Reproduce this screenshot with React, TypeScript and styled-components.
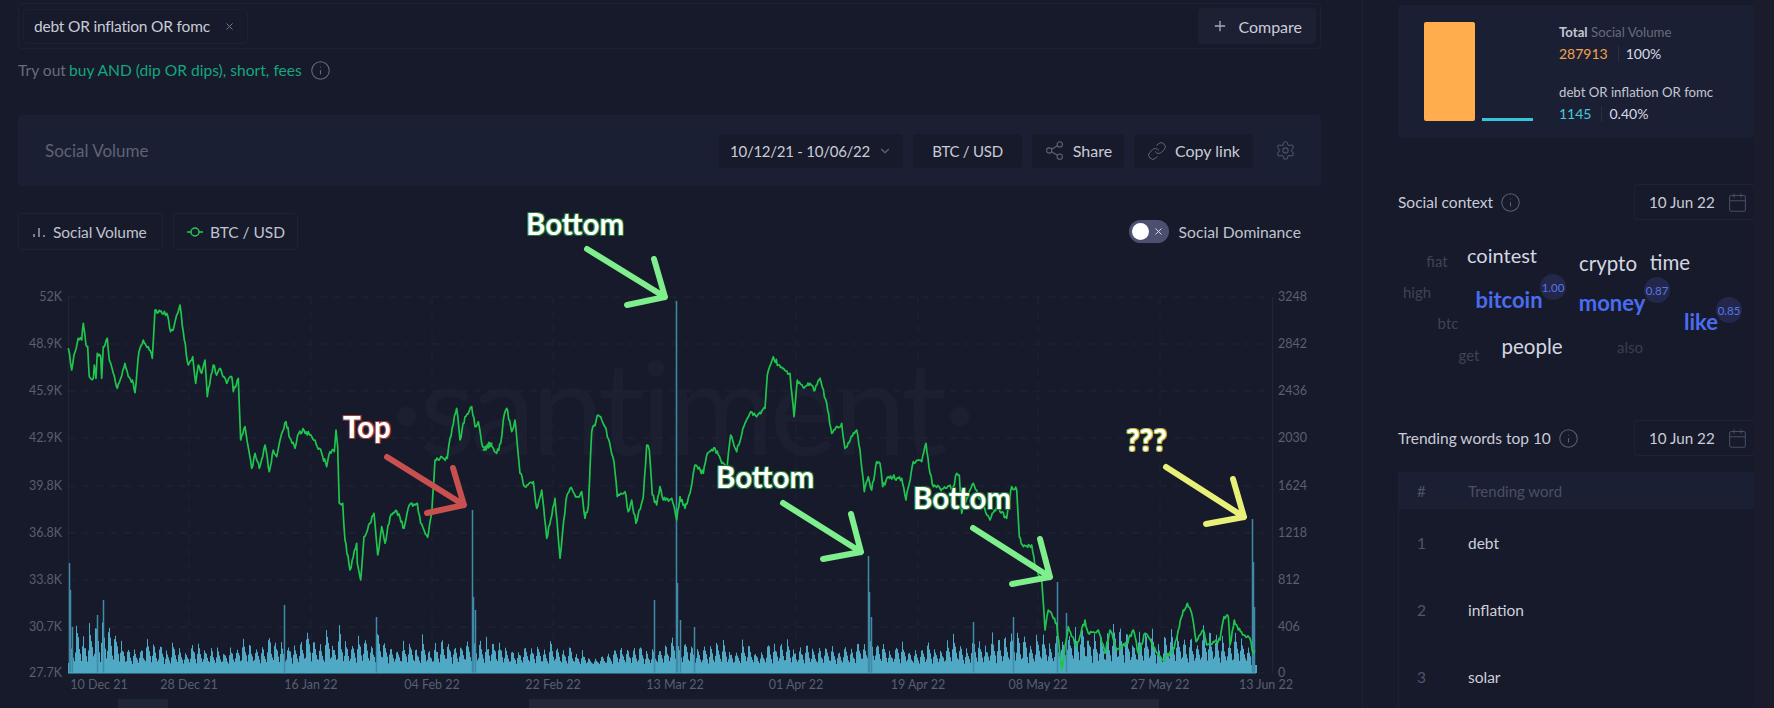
import styled, { createGlobalStyle } from 'styled-components';
import { Calendar, ChevronDown, Info, Link, Plus, Settings, Share2, X } from 'lucide-react';

const GlobalStyle = createGlobalStyle`
  html, body {
    margin: 0;
    background: #171a2a;
    overflow: hidden;
  }

  * {
    box-sizing: border-box;
  }
`;

const Page = styled.div`
  display: flex;
  width: 1774px;
  height: 708px;
  overflow: hidden;
  background: #171a2a;
  color: #d7dae4;
  font-family: 'Lato', 'Noto Sans', sans-serif;
`;

const Main = styled.main`
  width: 1362px;
  padding-top: 3px;
  flex-shrink: 0;
`;

const QueryBar = styled.div`
  display: flex;
  align-items: center;
  justify-content: space-between;
  width: 1303px;
  height: 46px;
  margin-left: 18px;
  padding: 0 4px;
  border: 1px solid #1d2133;
  border-radius: 4px;
`;

const Chip = styled.div`
  display: flex;
  align-items: center;
  gap: 14px;
  height: 35px;
  padding: 0 12px 0 10px;
  border: 1px solid #1c2032;
  border-radius: 4px;
  font-size: 15.5px;
  letter-spacing: -0.2px;
  color: #c9ccd8;

  svg {
    color: #7c8194;
  }
`;

const CompareButton = styled.div`
  display: flex;
  align-items: center;
  gap: 10px;
  height: 36px;
  padding: 0 14px;
  background: #1c2032;
  border-radius: 4px;
  font-size: 16px;
  color: #c9ccd8;

  svg {
    color: #a5a9b8;
  }
`;

const Hint = styled.div`
  display: flex;
  align-items: center;
  gap: 8px;
  height: 20px;
  margin: 11px 0 0 18px;
  font-size: 15.6px;
  color: #676c7f;

  svg {
    color: #676c7f;
  }
`;

const HintLinks = styled.span`
  margin-left: -5px;
  color: #14a67f;
`;

const ChartHeader = styled.div`
  display: flex;
  align-items: center;
  width: 1303px;
  height: 71px;
  margin: 35px 0 0 18px;
  padding: 0 25px 0 27px;
  background: #1b1f33;
  border-radius: 4px;
`;

const ChartTitle = styled.div`
  flex: 1;
  font-size: 17px;
  color: #5e6376;
`;

const HeaderActions = styled.div`
  display: flex;
  align-items: center;
  gap: 10px;
`;

const ActionButton = styled.div<{ $width: number; $compact?: boolean }>`
  display: flex;
  align-items: center;
  justify-content: center;
  gap: 8px;
  width: ${(p) => p.$width}px;
  height: 34px;
  background: #171a2a;
  border-radius: 4px;
  font-size: ${(p) => (p.$compact ? 15 : 16)}px;
  letter-spacing: ${(p) => (p.$compact ? -0.25 : 0)}px;
  color: #c9ccd8;

  svg {
    color: #5f6478;
  }
`;

const GearIcon = styled(Settings)`
  margin-left: 12px;
  color: #4d5266;
`;

const LegendRow = styled.div`
  display: flex;
  align-items: center;
  width: 1303px;
  height: 37px;
  margin: 27px 0 0 18px;
  gap: 10px;
`;

const LegendButton = styled.div<{ $width: number }>`
  display: flex;
  align-items: center;
  gap: 7px;
  width: ${(p) => p.$width}px;
  height: 37px;
  padding-left: 13px;
  border: 1px solid #1e2234;
  border-radius: 4px;
  font-size: 15.5px;
  letter-spacing: -0.05px;
  color: #c0c3d0;
`;

const DominanceToggle = styled.div`
  display: flex;
  align-items: center;
  gap: 10px;
  margin-left: auto;
  padding-right: 20px;
  font-size: 15.7px;
  color: #c0c3d0;
`;

const ToggleTrack = styled.div`
  display: flex;
  align-items: center;
  justify-content: space-between;
  width: 40px;
  height: 23px;
  padding: 0 5px 0 3px;
  background: #4c5070;
  border-radius: 12px;
  color: #e4e6ee;
`;

const ToggleKnob = styled.div`
  width: 17px;
  height: 17px;
  background: #ffffff;
  border-radius: 50%;
`;

const ChartArea = styled.div`
  position: relative;
  width: 1362px;
  height: 428px;
  margin-top: 30px;
`;

const ChartSvg = styled.svg`
  display: block;
  position: relative;
  overflow: visible;

  text {
    font-family: 'Lato', 'Noto Sans', sans-serif;
    font-size: 12.5px;
    fill: #5a5f72;
  }
`;

const Watermark = styled.div`
  position: absolute;
  left: 390px;
  top: 50px;
  font-family: 'Lato', sans-serif;
  font-weight: 400;
  font-size: 130px;
  line-height: 150px;
  letter-spacing: -4.5px;
  white-space: nowrap;
  color: #1b1f30;
`;

const Annotation = styled.div<{ $x: number; $y: number; $glow: string }>`
  position: absolute;
  left: ${(p) => p.$x}px;
  top: ${(p) => p.$y}px;
  font-size: 29.5px;
  font-weight: 700;
  line-height: 30px;
  color: #ffffff;
  white-space: nowrap;
  text-shadow:
    -1px -1px 0 ${(p) => p.$glow},
    1px -1px 0 ${(p) => p.$glow},
    -1px 1px 0 ${(p) => p.$glow},
    1px 1px 0 ${(p) => p.$glow};
`;

const FooterBand = styled.div<{ $x: number; $width: number; $color: string }>`
  position: absolute;
  left: ${(p) => p.$x}px;
  top: 419px;
  width: ${(p) => p.$width}px;
  height: 9px;
  background: ${(p) => p.$color};
`;

const Sidebar = styled.aside`
  width: 392px;
  height: 708px;
  padding: 5px 0 0 35px;
  border-left: 1px solid #1d2133;
  flex-shrink: 0;
`;

const RightGutter = styled.div`
  flex: 1;
  background: #1a1c2c;
`;

const RatioPanel = styled.div`
  display: flex;
  width: 356px;
  height: 133px;
  padding: 17px 0 0 26px;
  background: #1b1f33;
  border-radius: 4px;
`;

const RatioBars = styled.div`
  display: flex;
  align-items: flex-end;
  gap: 7px;
  height: 99px;
  margin-right: 26px;
`;

const RatioBar = styled.div<{ $height: number; $color: string }>`
  width: 51px;
  height: ${(p) => p.$height}px;
  background: ${(p) => p.$color};
  border-radius: ${(p) => (p.$height > 10 ? 2 : 0)}px;
`;

const RatioStats = styled.div`
  font-size: 13.2px;
  line-height: 20px;
`;

const StatTitle = styled.div`
  color: #c4c7d3;
`;

const StatMuted = styled.span`
  color: #666b7e;
`;

const StatStrong = styled.span`
  font-weight: 700;
`;

const StatLine = styled.div`
  display: flex;
  align-items: center;
  height: 22px;
  margin: 1px 0 17px;
  font-size: 14px;
`;

const StatValue = styled.span<{ $color: string }>`
  padding-right: 10px;
  margin-right: 7px;
  border-right: 1px solid #2a2e42;
  line-height: 16px;
  color: ${(p) => p.$color};
`;

const SectionHead = styled.div<{ $top: number }>`
  display: flex;
  align-items: center;
  gap: 7px;
  height: 36px;
  margin-top: ${(p) => p.$top}px;
  font-size: 15.5px;
  color: #c9ccd8;

  svg {
    color: #5a5f73;
  }
`;

const DateBox = styled.div`
  display: flex;
  align-items: center;
  gap: 12px;
  width: 120px;
  height: 36px;
  margin-left: auto;
  padding-left: 14px;
  border: 1px solid #1e2234;
  border-right: 0;
  border-radius: 4px 0 0 4px;
  font-size: 15.2px;
  color: #c9ccd8;

  svg {
    color: #484d63;
  }
`;

const Cloud = styled.div`
  position: relative;
  width: 356px;
  height: 182px;
`;

const CloudWord = styled.span<{ $x: number; $y: number; $size: number; $color: string; $bold?: boolean }>`
  position: absolute;
  left: ${(p) => p.$x}px;
  top: ${(p) => p.$y}px;
  transform: translate(-50%, -50%);
  font-size: ${(p) => p.$size}px;
  font-weight: ${(p) => (p.$bold ? 700 : 400)};
  color: ${(p) => p.$color};
  line-height: 1;
`;

const CloudScore = styled.span<{ $x: number; $y: number }>`
  position: absolute;
  left: ${(p) => p.$x}px;
  top: ${(p) => p.$y}px;
  display: flex;
  align-items: center;
  justify-content: center;
  width: 26px;
  height: 26px;
  transform: translate(-50%, -50%);
  background: #23284a;
  border-radius: 50%;
  font-size: 11.5px;
  color: #5675ea;
`;

const WordTable = styled.div`
  width: 356px;
  margin-top: 16px;
  border-left: 1px solid #1d2133;
`;

const TableHead = styled.div`
  display: flex;
  align-items: center;
  height: 37px;
  padding-left: 18px;
  background: #1b1f33;
  font-size: 15px;
  color: #4a4f64;
`;

const TableRow = styled.div`
  display: flex;
  align-items: center;
  height: 67px;
  padding-left: 18px;
  font-size: 15.5px;
  color: #cdd0db;
`;

const RankCell = styled.span`
  width: 51px;
  color: #50556a;
`;

type Point = [number, number];

const fromZoom = (pts: number[], ox: number): Point[] => {
  const out: Point[] = [];
  for (let i = 0; i < pts.length; i += 2) out.push([ox + pts[i] / 3, 280 + pts[i + 1] / 3]);
  return out;
};

const priceAnchors: Point[] = [
  ...fromZoom(
    [
      205, 205, 215, 270, 222, 225, 235, 175, 245, 180, 250, 130, 258, 195, 263, 200, 268, 290, 280, 295, 283, 255, 288,
      295, 292, 220, 302, 230, 305, 295, 310, 200, 322, 175, 328, 240, 340, 280, 352, 325, 362, 295, 375, 250, 385, 290,
      400, 310, 405, 338, 417, 215, 430, 180, 445, 200, 457, 235, 465, 90, 480, 95, 500, 100, 512, 155, 522, 140, 530,
      105, 540, 75, 553, 180, 565, 255, 578, 230, 587, 310, 595, 255, 605, 280, 615, 240, 622, 350, 640, 255, 650, 285,
      660, 265, 672, 290, 680, 310, 695, 290, 700, 335, 715, 295, 722, 480, 735, 440, 748, 520, 755, 565, 765, 520, 778,
      565, 795, 495, 808, 575, 820, 510, 830, 530, 838, 490, 858, 425, 870, 475, 885, 505, 893, 465, 912, 450, 935, 470,
      965, 520, 980, 560, 990, 515, 1003, 515, 1008, 450, 1013, 500, 1018, 670, 1028, 670, 1035, 780, 1050, 870, 1070,
      790, 1072, 850, 1082, 900, 1092, 770, 1110, 730, 1122, 700, 1133, 825, 1145, 740, 1155, 790, 1170, 712, 1190, 692,
      1212, 745, 1228, 675, 1252, 670, 1262, 730, 1283, 772, 1295, 700, 1305, 540, 1320, 535, 1342, 535, 1350, 475,
      1370, 385, 1380, 480, 1395, 410, 1415, 380, 1425, 440, 1435, 425, 1445, 490, 1455, 510, 1475, 490,
    ],
    0,
  ),
  ...fromZoom(
    [
      10, 510, 30, 490, 50, 520, 62, 490, 70, 420, 80, 385, 95, 455, 105, 420, 120, 580, 135, 620, 160, 605, 170, 685,
      185, 630, 200, 775, 225, 655, 240, 835, 258, 660, 270, 625, 290, 650, 305, 635, 315, 715, 325, 680, 335, 455, 355,
      405, 375, 440, 402, 545, 412, 650, 435, 635, 445, 695, 455, 660, 468, 730, 490, 650, 500, 495, 508, 510, 517, 645,
      530, 675, 540, 620, 550, 660, 575, 655, 590, 720, 600, 650, 615, 685, 630, 640, 645, 555, 670, 580, 682, 520, 705,
      505, 725, 550, 742, 555, 752, 465, 770, 515, 795, 430, 812, 395, 830, 410, 855, 385, 862, 285, 880, 230, 895, 255,
      930, 280, 942, 410, 952, 300, 975, 320, 990, 310, 1005, 330, 1020, 295, 1040, 370, 1055, 460, 1085, 430, 1095,
      505, 1130, 450, 1140, 510, 1153, 635, 1165, 590, 1175, 630, 1190, 545, 1200, 550, 1208, 620, 1225, 590, 1265, 595,
      1278, 660, 1300, 545, 1325, 545,
    ],
    480,
  ),
  ...fromZoom(
    [
      78, 490, 90, 580, 100, 620, 120, 625, 160, 620, 170, 580, 178, 585, 185, 700, 220, 610, 250, 680, 270, 720, 290,
      680, 320, 715, 335, 620, 350, 630, 358, 770, 370, 800, 395, 795, 405, 860, 425, 900, 435, 1050, 445, 990, 470,
      1030, 485, 1170, 505, 1040, 530, 1100, 555, 1020, 565, 1060, 595, 1050, 615, 1120, 630, 1050, 650, 1110, 680,
      1090, 700, 1050, 715, 1120, 735, 1060, 760, 1100, 790, 1140, 820, 1110, 835, 1050, 850, 990, 862, 970, 875, 1000,
      888, 1085, 910, 1050, 920, 1095, 960, 1080, 972, 1010, 985, 1010, 990, 1095, 1003, 1020, 1015, 1050, 1050, 1075,
      1060, 1120, 1065, 1115,
    ],
    900,
  ),
];

const seeded = (seed: number) => {
  let s = seed;
  return () => {
    s = (s * 16807) % 2147483647;
    return (s - 1) / 2147483646;
  };
};

const buildPricePath = () => {
  const rnd = seeded(4711);
  let d = '';
  priceAnchors.forEach(([x, y], i) => {
    if (i === 0) {
      d = `M${x.toFixed(1)} ${y.toFixed(1)}`;
      return;
    }
    const [px, py] = priceAnchors[i - 1];
    const steps = Math.max(1, Math.round((x - px) / 1.1));
    for (let k = 1; k <= steps; k++) {
      const t = k / steps;
      const noise = k === steps ? 0 : (rnd() - 0.5) * 5;
      d += `L${(px + (x - px) * t).toFixed(1)} ${(py + (y - py) * t + noise).toFixed(1)}`;
    }
  });
  return d;
};

const envelope: Point[] = [
  [68, 36], [112, 40], [125, 22], [230, 17], [245, 25], [330, 32], [400, 28], [440, 22], [476, 30], [500, 20],
  [570, 20], [590, 9], [640, 19], [680, 30], [700, 24], [840, 18], [870, 30], [900, 22], [1000, 28], [1060, 34],
  [1250, 30],
];

const envelopeAt = (x: number) => {
  for (let i = 1; i < envelope.length; i++) {
    const [x1, y1] = envelope[i];
    if (x <= x1) {
      const [x0, y0] = envelope[i - 1];
      return y0 + ((y1 - y0) * (x - x0)) / (x1 - x0);
    }
  }
  return 0;
};

const BASELINE = 673;

// spikes read off the reference: [x, y of the top]
const spikes: Point[] = [
  [69, 563], [70, 590], [72, 627], [97, 615], [103, 600], [284, 605], [376, 617], [472, 510], [473, 597], [475, 610],
  [654, 600], [676, 301], [677, 583], [680, 620], [694, 627], [868, 556], [869, 592], [871, 617], [973, 622],
  [1013, 617], [1057, 582], [1066, 613], [1252, 519], [1253, 562], [1254, 607],
];

const buildBars = () => {
  const rnd = seeded(91);
  const dayPeak: number[] = [];
  let d = '';
  for (let x = 68; x <= 1256; x++) {
    const pos = (x - 68) / 6.4;
    const day = Math.floor(pos);
    if (dayPeak[day] === undefined) dayPeak[day] = 0.6 + rnd() * 0.65;
    const phase = pos - day;
    const shape = phase < 0.3 ? phase / 0.3 : 1 - (phase - 0.3) / 0.7;
    const h = 8 + envelopeAt(x) * dayPeak[day] * (0.08 + 0.92 * shape) * (0.8 + rnd() * 0.35);
    d += `M${x + 0.5} ${BASELINE}V${(BASELINE - h).toFixed(1)}`;
  }
  return d;
};

const buildSpikes = () => spikes.map(([x, y]) => `M${x + 0.5} ${BASELINE}V${y}`).join('');

const pricePath = buildPricePath();
const barsPath = buildBars();
const spikesPath = buildSpikes();

const gridRows = [297, 344, 391, 438, 486, 533, 580, 627, 673];
const priceLabels = ['52K', '48.9K', '45.9K', '42.9K', '39.8K', '36.8K', '33.8K', '30.7K', '27.7K'];
const volumeLabels = ['3248', '2842', '2436', '2030', '1624', '1218', '812', '406', '0'];
const dateLabels: [number, string][] = [
  [99, '10 Dec 21'], [189, '28 Dec 21'], [311, '16 Jan 22'], [432, '04 Feb 22'], [553, '22 Feb 22'], [675, '13 Mar 22'],
  [796, '01 Apr 22'], [918, '19 Apr 22'], [1038, '08 May 22'], [1160, '27 May 22'], [1266, '13 Jun 22'],
];

const arrows: { color: string; d: string }[] = [
  { color: '#7fee8d', d: 'M587 249L665 297M654 259L665 297L627 305' },
  { color: '#c8504e', d: 'M387 457L464 505M453 468L464 505L427 513' },
  { color: '#7fee8d', d: 'M783 503L861 552M851 514L861 552L823 559' },
  { color: '#7fee8d', d: 'M973 528L1050 577M1040 539L1050 577L1012 584' },
  { color: '#e8f07a', d: 'M1166 467L1244 517M1233 479L1244 517L1206 524' },
];

const cloudWords = [
  { text: 'fiat', x: 39, y: 41, size: 15, color: '#3f4356' },
  { text: 'cointest', x: 104, y: 35, size: 20, color: '#d4d7e1' },
  { text: 'crypto', x: 210, y: 43, size: 20.5, color: '#d4d7e1' },
  { text: 'time', x: 272, y: 42, size: 20.5, color: '#d4d7e1' },
  { text: 'high', x: 19, y: 72, size: 15, color: '#3f4356' },
  { text: 'bitcoin', x: 111, y: 80, size: 22, color: '#4a6cf0', bold: true },
  { text: 'money', x: 214, y: 83, size: 22, color: '#4a6cf0', bold: true },
  { text: 'like', x: 303, y: 102, size: 22, color: '#4a6cf0', bold: true },
  { text: 'btc', x: 50, y: 103, size: 15, color: '#3f4356' },
  { text: 'get', x: 71, y: 135, size: 15, color: '#3f4356' },
  { text: 'people', x: 134, y: 126, size: 20.5, color: '#d4d7e1' },
  { text: 'also', x: 232, y: 127, size: 15, color: '#3a3e50' },
];

const cloudScores = [
  { text: '1.00', x: 155, y: 67 },
  { text: '0.87', x: 259, y: 70 },
  { text: '0.85', x: 331, y: 90 },
];

const trendingWords = ['debt', 'inflation', 'solar'];

const BarsIcon = () => (
  <svg width="14" height="14" viewBox="0 0 14 14" fill="none" stroke="#a5a9b8" strokeWidth="1.4">
    <path d="M2 12V9M7 12V3M12 12V10" />
  </svg>
);

const LineIcon = () => (
  <svg width="16" height="14" viewBox="0 0 16 14" fill="none" stroke="#26c953" strokeWidth="1.5">
    <circle cx="8" cy="7" r="4" />
    <path d="M0 7H4M12 7H16" />
  </svg>
);

const App = () => (
  <Page>
    <GlobalStyle />
    <Main>
      <QueryBar>
        <Chip>
          debt OR inflation OR fomc
          <X size={11} />
        </Chip>
        <CompareButton>
          <Plus size={16} />
          Compare
        </CompareButton>
      </QueryBar>

      <Hint>
        Try out
        <HintLinks>buy AND (dip OR dips), short, fees</HintLinks>
        <Info size={21} strokeWidth={1.2} />
      </Hint>

      <ChartHeader>
        <ChartTitle>Social Volume</ChartTitle>
        <HeaderActions>
          <ActionButton $width={184} $compact>
            10/12/21 - 10/06/22
            <ChevronDown size={14} />
          </ActionButton>
          <ActionButton $width={109} $compact>
            BTC / USD
          </ActionButton>
          <ActionButton $width={92}>
            <Share2 size={21} strokeWidth={1.2} />
            Share
          </ActionButton>
          <ActionButton $width={119}>
            <Link size={20} strokeWidth={1.2} />
            Copy link
          </ActionButton>
          <GearIcon size={21} strokeWidth={1.2} />
        </HeaderActions>
      </ChartHeader>

      <LegendRow>
        <LegendButton $width={145}>
          <BarsIcon />
          Social Volume
        </LegendButton>
        <LegendButton $width={125}>
          <LineIcon />
          BTC / USD
        </LegendButton>
        <DominanceToggle>
          <ToggleTrack>
            <ToggleKnob />
            <X size={11} />
          </ToggleTrack>
          Social Dominance
        </DominanceToggle>
      </LegendRow>

      <ChartArea>
        <Watermark>·santiment·</Watermark>
        <ChartSvg width="1362" height="428" viewBox="0 280 1362 428">
          {gridRows.map((y) => (
            <line key={y} x1="68" x2="1272" y1={y} y2={y} stroke="#212536" strokeDasharray="7 7" />
          ))}
          {dateLabels.slice(1, 10).map(([x]) => (
            <line key={x} x1={x} x2={x} y1="297" y2="673" stroke="#1f2334" strokeDasharray="7 7" />
          ))}
          <line x1="68.5" x2="68.5" y1="297" y2="673" stroke="#212536" />
          <line x1="1272.5" x2="1272.5" y1="297" y2="673" stroke="#212536" />
          <path d={barsPath} stroke="#4fa9c5" strokeWidth="1" fill="none" />
          <path d={spikesPath} stroke="#3f8aa6" strokeWidth="1.5" fill="none" />
          <line x1="68" x2="1256" y1="673" y2="673" stroke="#4fa9c5" />
          <path d={pricePath} stroke="#1fc64e" strokeWidth="1.7" fill="none" strokeLinejoin="round" />
          {priceLabels.map((label, i) => (
            <text key={label} x="62" y={gridRows[i] + 4} textAnchor="end">
              {label}
            </text>
          ))}
          {volumeLabels.map((label, i) => (
            <text key={label} x="1278" y={gridRows[i] + 4}>
              {label}
            </text>
          ))}
          {dateLabels.map(([x, label]) => (
            <text key={label} x={x} y="689" textAnchor="middle">
              {label}
            </text>
          ))}
          {arrows.map((a) => (
            <path
              key={a.d}
              d={a.d}
              stroke={a.color}
              strokeWidth="6"
              strokeLinecap="round"
              strokeLinejoin="round"
              fill="none"
            />
          ))}
        </ChartSvg>
        <Annotation $x={526} $y={-71} $glow="#1f7a35">
          Bottom
        </Annotation>
        <Annotation $x={343} $y={132} $glow="#a03c3c">
          Top
        </Annotation>
        <Annotation $x={716} $y={182} $glow="#1f7a35">
          Bottom
        </Annotation>
        <Annotation $x={913} $y={203} $glow="#1f7a35">
          Bottom
        </Annotation>
        <Annotation $x={1126} $y={145} $glow="#b5bb3c">
          ???
        </Annotation>
        <FooterBand $x={118} $width={50} $color="#1f2636" />
        <FooterBand $x={529} $width={630} $color="#24263a" />
      </ChartArea>
    </Main>

    <Sidebar>
      <RatioPanel>
        <RatioBars>
          <RatioBar $height={99} $color="#ffad4d" />
          <RatioBar $height={3} $color="#37c5da" />
        </RatioBars>
        <RatioStats>
          <StatTitle>
            <StatStrong>Total</StatStrong> <StatMuted>Social Volume</StatMuted>
          </StatTitle>
          <StatLine>
            <StatValue $color="#f2a34c">287913</StatValue>
            100%
          </StatLine>
          <StatTitle>debt OR inflation OR fomc</StatTitle>
          <StatLine>
            <StatValue $color="#4ac6dc">1145</StatValue>
            0.40%
          </StatLine>
        </RatioStats>
      </RatioPanel>

      <SectionHead $top={46}>
        Social context
        <Info size={21} strokeWidth={1.2} />
        <DateBox>
          10 Jun 22
          <Calendar size={21} strokeWidth={1.2} />
        </DateBox>
      </SectionHead>

      <Cloud>
        {cloudWords.map((w) => (
          <CloudWord key={w.text} $x={w.x} $y={w.y} $size={w.size} $color={w.color} $bold={w.bold}>
            {w.text}
          </CloudWord>
        ))}
        {cloudScores.map((s) => (
          <CloudScore key={s.text} $x={s.x} $y={s.y}>
            {s.text}
          </CloudScore>
        ))}
      </Cloud>

      <SectionHead $top={18}>
        Trending words top 10
        <Info size={21} strokeWidth={1.2} />
        <DateBox>
          10 Jun 22
          <Calendar size={21} strokeWidth={1.2} />
        </DateBox>
      </SectionHead>

      <WordTable>
        <TableHead>
          <RankCell>#</RankCell>
          Trending word
        </TableHead>
        {trendingWords.map((word, i) => (
          <TableRow key={word}>
            <RankCell>{i + 1}</RankCell>
            {word}
          </TableRow>
        ))}
      </WordTable>
    </Sidebar>
    <RightGutter />
  </Page>
);

export default App;
